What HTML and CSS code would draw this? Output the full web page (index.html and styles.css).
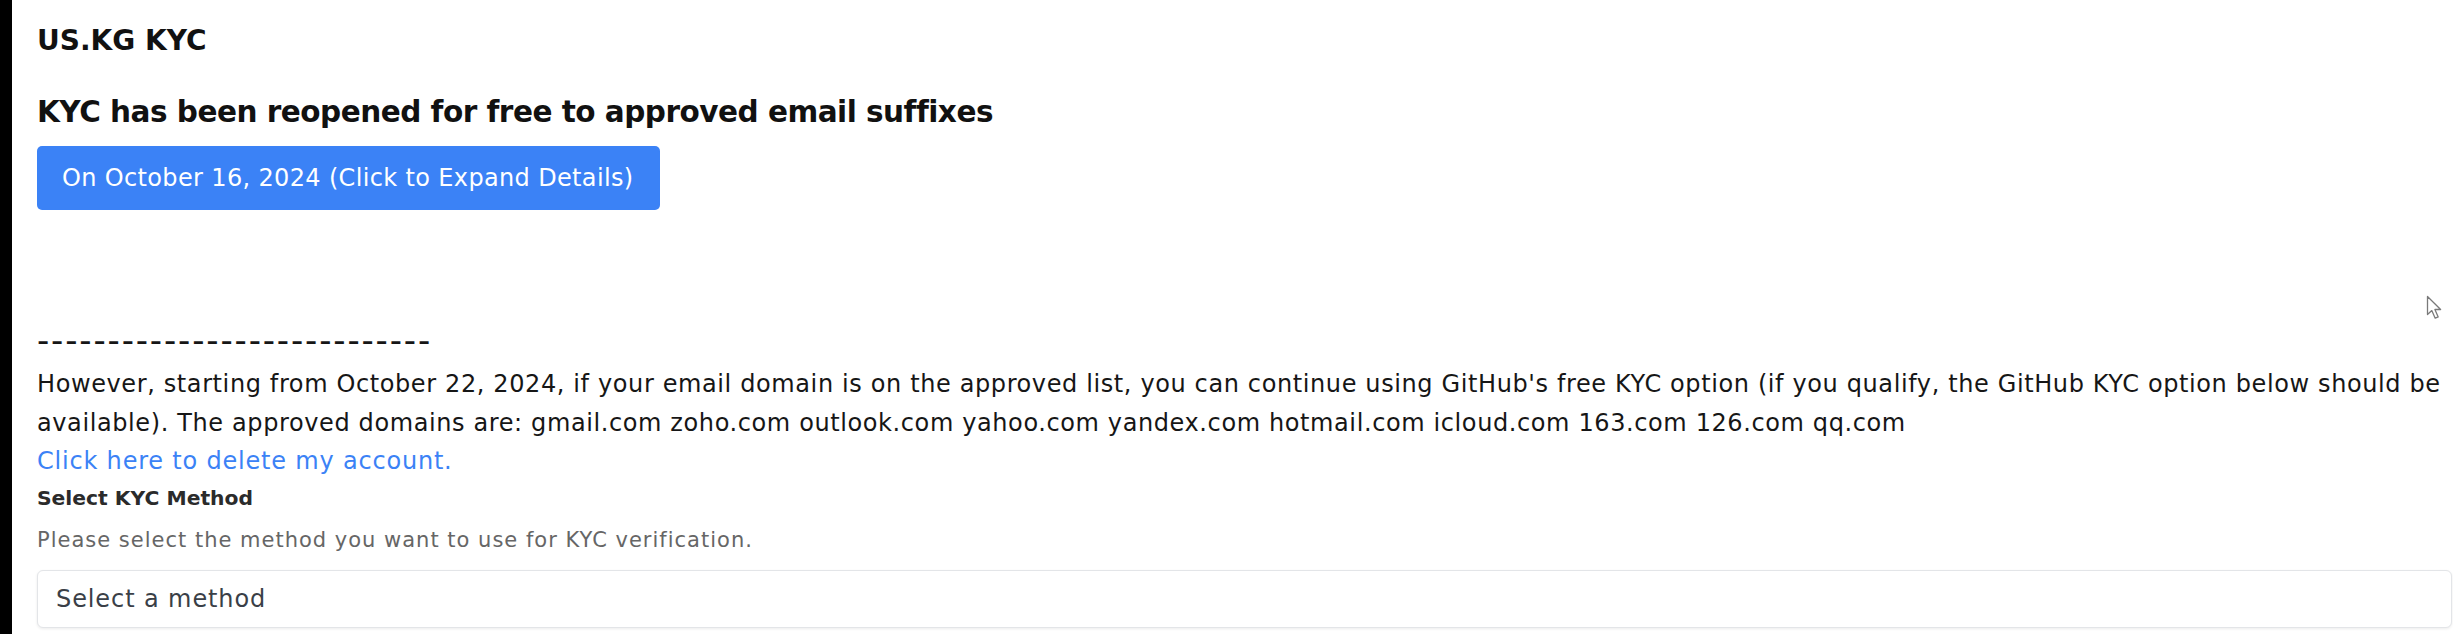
FILE: index.html
```html
<!DOCTYPE html>
<html lang="en">
<head>
<meta charset="utf-8">
<title>US.KG KYC</title>
<link rel="stylesheet" href="styles.css">
</head>
<body>
<div class="edge"></div>
<main class="page">
  <h1 class="site-title">US.KG KYC</h1>
  <h2 class="notice-title">KYC has been reopened for free to approved email suffixes</h2>
  <button class="expand-btn" type="button">On October 16, 2024 (Click to Expand Details)</button>
  <div class="notice">
    <div class="dashes">----------------------------</div>
    <p class="notice-text">However, starting from October 22, 2024, if your email domain is on the approved list, you can continue using GitHub's free KYC option (if you qualify, the GitHub KYC option below should be available). The approved domains are: gmail.com zoho.com outlook.com yahoo.com yandex.com hotmail.com icloud.com 163.com 126.com qq.com</p>
    <a class="delete-link" href="#">Click here to delete my account.</a>
  </div>
  <form class="kyc-form">
    <label class="field-label" for="method">Select KYC Method</label>
    <p class="field-help">Please select the method you want to use for KYC verification.</p>
    <select class="method-select" id="method">
      <option>Select a method</option>
    </select>
  </form>
</main>
<svg class="cursor" width="18" height="26" viewBox="0 0 18 26" aria-hidden="true">
  <path d="M1.5 1.5 L1.5 19.5 L5.8 15.6 L9.2 23.2 L12.2 21.9 L8.9 14.5 L14.6 14.5 Z" fill="#fff" stroke="#7a7a7a" stroke-width="1.3" stroke-linejoin="round"/>
</svg>
</body>
</html>
```
FILE: styles.css
```css
html, body {
  margin: 0;
  height: 100%;
  overflow: hidden;
  background: #fff;
}
body {
  display: flex;
  font-family: "DejaVu Sans", "Noto Sans", sans-serif;
  color: #161616;
}
.edge {
  width: 12px;
  flex: 0 0 12px;
  background: #000;
}
.page {
  flex: 1;
  min-width: 0;
  padding: 21px 1px 0 25px;
}
.site-title {
  margin: 0;
  font-size: 28px;
  line-height: 40px;
  font-weight: 700;
  color: #111;
}
.notice-title {
  margin: 31px 0 0;
  font-size: 29.5px;
  line-height: 40px;
  font-weight: 700;
  letter-spacing: -0.5px;
  color: #111;
}
.expand-btn {
  display: block;
  margin-top: 14px;
  height: 64px;
  padding: 0 26px 0 25px;
  border: 0;
  border-radius: 5px;
  background: #3b82f6;
  color: #fff;
  font-family: inherit;
  font-size: 24px;
  line-height: 36px;
  letter-spacing: 0.35px;
  cursor: pointer;
}
.notice {
  margin-top: 111px;
}
.dashes {
  font-size: 34px;
  line-height: 38px;
  letter-spacing: 1.84px;
  margin-bottom: 6px;
  white-space: nowrap;
}
.notice-text {
  margin: 0;
  font-size: 24px;
  line-height: 38.5px;
  letter-spacing: 0.6px;
  word-spacing: 0.1px;
}
.delete-link {
  display: block;
  font-size: 24px;
  line-height: 38.5px;
  letter-spacing: 0.8px;
  color: #3b82f6;
  text-decoration: none;
}
.kyc-form {
  margin: 2px 0 0;
}
.field-label {
  display: block;
  font-size: 20.3px;
  line-height: 30px;
  font-weight: 700;
  color: #2b2b2b;
}
.field-help {
  margin: 12.5px 0 0;
  font-size: 21px;
  line-height: 30px;
  letter-spacing: 1px;
  color: #666;
}
.method-select {
  display: block;
  box-sizing: border-box;
  width: 100%;
  height: 58px;
  margin-top: 14.5px;
  padding: 0 18px;
  border: 1px solid #e3e5e8;
  border-radius: 6px;
  background: #fff;
  box-shadow: 0 1px 3px rgba(0, 0, 0, 0.08);
  -webkit-appearance: none;
  appearance: none;
  font-family: inherit;
  font-size: 24px;
  letter-spacing: 0.9px;
  color: #3a3f47;
}
.cursor {
  position: absolute;
  left: 2426px;
  top: 295px;
}
```
